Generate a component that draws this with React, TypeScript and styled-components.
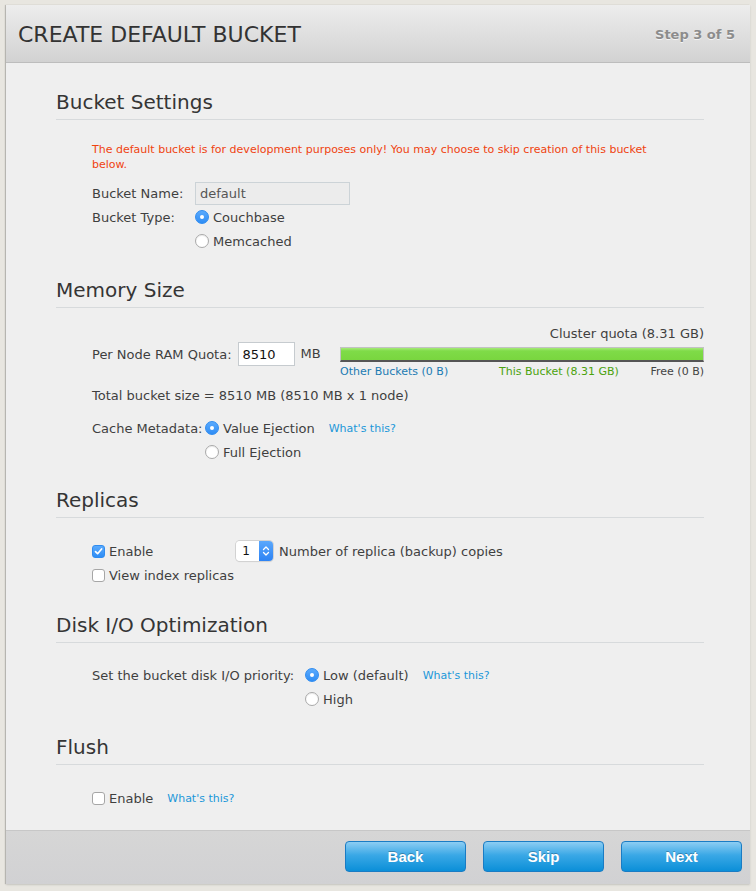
import React from 'react';
import styled, { createGlobalStyle } from 'styled-components';

const GlobalStyle = createGlobalStyle`
    html, body {
        margin: 0;
        padding: 0;
        background: #e8e6e0;
    }
    body {
        font-family: 'DejaVu Sans', Verdana, sans-serif;
        font-size: 13px;
        color: #3f3f3f;
    }
`;

const Page = styled.div`
    padding: 5px 6px 6px 6px;
`;

const Panel = styled.div`
    background: #efefef;
    box-shadow: -1px 0 1px rgba(0, 0, 0, 0.18), 0 1px 2px rgba(0, 0, 0, 0.12);
`;

const Header = styled.div`
    box-sizing: border-box;
    height: 58px;
    border-bottom: 1px solid #bdbdbd;
    background: linear-gradient(#ededed, #d2d2d2);
    display: flex;
    align-items: center;
    justify-content: space-between;
    padding: 1px 15px 0 12px;
`;

const Title = styled.h1`
    margin: 0;
    font-size: 22px;
    font-weight: normal;
    color: #333;
`;

const Step = styled.div`
    font-weight: bold;
    font-size: 13px;
    color: #8c8c8c;
    text-shadow: 0 1px 0 #f4f4f4;
`;

const Body = styled.div`
    padding: 27px 46px 20px 50px;
`;

const Section = styled.section<{ $top?: number }>`
    margin-top: ${(p) => p.$top ?? 24}px;

    &:first-child {
        margin-top: 0;
    }
`;

const SectionTitle = styled.h2`
    margin: 0;
    font-size: 20px;
    line-height: 24px;
    font-weight: normal;
    color: #353535;
    padding-bottom: 5px;
    border-bottom: 1px solid #d7dadc;
`;

const Content = styled.div<{ $top?: number }>`
    padding-left: 36px;
    margin-top: ${(p) => p.$top ?? 20}px;
`;

const Warning = styled.p`
    margin: 0 0 9px 0;
    max-width: 565px;
    font-size: 11px;
    line-height: 15px;
    color: #f0430f;
`;

const FormGrid = styled.div<{ $label?: string }>`
    display: grid;
    grid-template-columns: ${(p) => p.$label ?? 'auto'} auto 1fr;
    grid-auto-rows: 24px;
    align-items: center;
`;

const CacheBlock = styled.div`
    margin-top: 11px;
`;

const Label = styled.span`
    white-space: nowrap;
`;

const TextInput = styled.input<{ $w: number; $muted?: boolean }>`
    box-sizing: border-box;
    width: ${(p) => p.$w}px;
    height: ${(p) => (p.$muted ? 23 : 24)}px;
    padding: 0 4px;
    border: 1px solid ${(p) => (p.$muted ? '#ccd3d7' : '#c6cbcf')};
    background: ${(p) => (p.$muted ? '#ececec' : '#fff')};
    color: ${(p) => (p.$muted ? '#555' : '#111')};
    font-family: 'DejaVu Sans', Verdana, sans-serif;
    font-size: 13px;
    outline: none;
`;

const Option = styled.label`
    display: flex;
    align-items: center;
    gap: 4px;
    white-space: nowrap;
`;

const RadioDot = styled.span<{ $on?: boolean }>`
    box-sizing: border-box;
    width: 14px;
    height: 14px;
    border-radius: 50%;
    flex: none;
    display: flex;
    align-items: center;
    justify-content: center;
    border: 1px solid ${(p) => (p.$on ? '#2f8cf0' : '#a9a9a9')};
    background: ${(p) => (p.$on ? 'linear-gradient(#5aaafd, #2f8df5)' : '#fff')};
    box-shadow: ${(p) => (p.$on ? 'none' : 'inset 0 1px 1px rgba(0,0,0,0.08)')};

    &::after {
        content: '';
        display: ${(p) => (p.$on ? 'block' : 'none')};
        width: 4px;
        height: 4px;
        border-radius: 50%;
        background: #fff;
    }
`;

const Box = styled.span<{ $on?: boolean }>`
    box-sizing: border-box;
    width: 13px;
    height: 13px;
    border-radius: 3px;
    flex: none;
    display: flex;
    align-items: center;
    justify-content: center;
    border: 1px solid ${(p) => (p.$on ? '#2f8cf0' : '#a6a6a6')};
    background: ${(p) => (p.$on ? 'linear-gradient(#5aaafd, #2f8df5)' : '#fff')};
`;

const Help = styled.a`
    font-size: 11px;
    color: #1b97d9;
    text-decoration: none;
    margin-left: 14px;
    white-space: nowrap;
`;

const MemoryGrid = styled.div`
    display: grid;
    grid-template-columns: 248px 1fr;
    grid-template-rows: 18px 24px auto;
    align-items: center;
`;

const Quota = styled.div`
    grid-column: 2;
    grid-row: 1;
    text-align: right;
`;

const RamGroup = styled.div`
    grid-column: 1;
    grid-row: 2;
    display: flex;
    align-items: center;
    gap: 6px;
`;

const Unit = styled.span`
    margin-top: -2px;
`;

const Bar = styled.div`
    grid-column: 2;
    grid-row: 2;
    height: 15px;
    box-sizing: border-box;
    border: 1px solid #c2c2c2;
    border-bottom: 2px solid #555;
    background: linear-gradient(#a6ea78 0%, #7fdb48 25%, #79d63f 100%);
`;

const Legend = styled.div`
    grid-column: 2;
    grid-row: 3;
    display: grid;
    grid-template-columns: 159px 1fr auto;
    font-size: 11px;
    line-height: 14px;
    margin-top: -1px;
`;

const LegendItem = styled.span<{ $color: string }>`
    color: ${(p) => p.$color};
    white-space: nowrap;
`;

const Total = styled.div`
    margin-top: 8px;
    line-height: 18px;
`;

const Spinner = styled.span`
    display: inline-flex;
    width: 37px;
    height: 20px;
    border-radius: 4px;
    overflow: hidden;
    box-shadow: 0 0 0 1px #d2d2d2, 0 1px 1px rgba(0, 0, 0, 0.12);
    margin-right: 6px;
`;

const SpinnerValue = styled.span`
    flex: 1;
    background: #fff;
    display: flex;
    align-items: center;
    justify-content: flex-end;
    padding-right: 9px;
    font-size: 12px;
    color: #111;
`;

const SpinnerArrows = styled.span`
    width: 14px;
    background: linear-gradient(#5ba8fc, #2d83f4);
    display: flex;
    align-items: center;
    justify-content: center;
`;

const InlineRow = styled.div`
    display: flex;
    align-items: center;
    height: 24px;
`;

const Footer = styled.div`
    border-top: 1px solid #c7c7c7;
    background: linear-gradient(#d6d6d6, #d1d1d3);
    padding: 10px 8px 12px 8px;
    display: flex;
    justify-content: flex-end;
    gap: 17px;
`;

const Button = styled.button`
    width: 121px;
    height: 31px;
    border: 1px solid #1a7cc4;
    border-radius: 4px;
    background: linear-gradient(#8dcdf3 0%, #3aa8e6 45%, #0b8fd8 100%);
    color: #fff;
    font-family: 'Liberation Sans', Arial, sans-serif;
    font-weight: bold;
    font-size: 15px;
    text-shadow: 0 -1px 0 rgba(0, 0, 0, 0.25);
    cursor: pointer;
`;

function Radio({ on, children }: { on?: boolean; children: React.ReactNode }) {
    return (
        <Option>
            <RadioDot $on={on} />
            {children}
        </Option>
    );
}

function Check({ on, children }: { on?: boolean; children: React.ReactNode }) {
    return (
        <Option>
            <Box $on={on}>
                {on && (
                    <svg width="9" height="9" viewBox="0 0 9 9">
                        <path d="M1.5 4.6 L3.6 6.7 L7.6 2" stroke="#fff" strokeWidth="1.7" fill="none" strokeLinecap="round" strokeLinejoin="round" />
                    </svg>
                )}
            </Box>
            {children}
        </Option>
    );
}

const App: React.FC = () => {
    return (
        <Page>
            <GlobalStyle />
            <Panel>
                <Header>
                    <Title>CREATE DEFAULT BUCKET</Title>
                    <Step>Step 3 of 5</Step>
                </Header>
                <Body>
                    <Section>
                        <SectionTitle>Bucket Settings</SectionTitle>
                        <Content $top={22}>
                            <Warning>
                                The default bucket is for development purposes only! You may choose to skip creation of this bucket below.
                            </Warning>
                            <FormGrid $label="103px">
                                <Label>Bucket Name:</Label>
                                <TextInput $w={155} $muted defaultValue="default" />
                                <span />
                                <Label>Bucket Type:</Label>
                                <Radio on>Couchbase</Radio>
                                <span />
                                <span />
                                <Radio>Memcached</Radio>
                            </FormGrid>
                        </Content>
                    </Section>

                    <Section $top={25}>
                        <SectionTitle>Memory Size</SectionTitle>
                        <Content $top={16}>
                            <MemoryGrid>
                                <Quota>Cluster quota (8.31 GB)</Quota>
                                <RamGroup>
                                    <Label>Per Node RAM Quota:</Label>
                                    <TextInput $w={57} defaultValue="8510" />
                                    <Unit>MB</Unit>
                                </RamGroup>
                                <Bar />
                                <Legend>
                                    <LegendItem $color="#1b7bb3">Other Buckets (0 B)</LegendItem>
                                    <LegendItem $color="#4ba20d">This Bucket (8.31 GB)</LegendItem>
                                    <LegendItem $color="#444">Free (0 B)</LegendItem>
                                </Legend>
                            </MemoryGrid>
                            <Total>Total bucket size = 8510 MB (8510 MB x 1 node)</Total>
                            <CacheBlock>
                                <FormGrid $label="113px">
                                    <Label>Cache Metadata:</Label>
                                    <Radio on>Value Ejection</Radio>
                                    <Help>What's this?</Help>
                                    <span />
                                    <Radio>Full Ejection</Radio>
                                    <span />
                                </FormGrid>
                            </CacheBlock>
                        </Content>
                    </Section>

                    <Section>
                        <SectionTitle>Replicas</SectionTitle>
                        <Content $top={21}>
                            <FormGrid $label="144px">
                                <Check on>Enable</Check>
                                <InlineRow>
                                    <Spinner>
                                        <SpinnerValue>1</SpinnerValue>
                                        <SpinnerArrows>
                                            <svg width="8" height="12" viewBox="0 0 8 12">
                                                <path d="M1.5 4.5 L4 2 L6.5 4.5 M1.5 7.5 L4 10 L6.5 7.5" stroke="#fff" strokeWidth="1.3" fill="none" strokeLinecap="round" strokeLinejoin="round" />
                                            </svg>
                                        </SpinnerArrows>
                                    </Spinner>
                                    Number of replica (backup) copies
                                </InlineRow>
                                <span />
                                <Check>View index replicas</Check>
                            </FormGrid>
                        </Content>
                    </Section>

                    <Section $top={26}>
                        <SectionTitle>Disk I/O Optimization</SectionTitle>
                        <Content>
                            <FormGrid $label="213px">
                                <Label>Set the bucket disk I/O priority:</Label>
                                <Radio on>Low (default)</Radio>
                                <Help>What's this?</Help>
                                <span />
                                <Radio>High</Radio>
                                <span />
                            </FormGrid>
                        </Content>
                    </Section>

                    <Section>
                        <SectionTitle>Flush</SectionTitle>
                        <Content $top={21}>
                            <InlineRow>
                                <Check>Enable</Check>
                                <Help>What's this?</Help>
                            </InlineRow>
                        </Content>
                    </Section>
                </Body>
                <Footer>
                    <Button>Back</Button>
                    <Button>Skip</Button>
                    <Button>Next</Button>
                </Footer>
            </Panel>
        </Page>
    );
};

export default App;
